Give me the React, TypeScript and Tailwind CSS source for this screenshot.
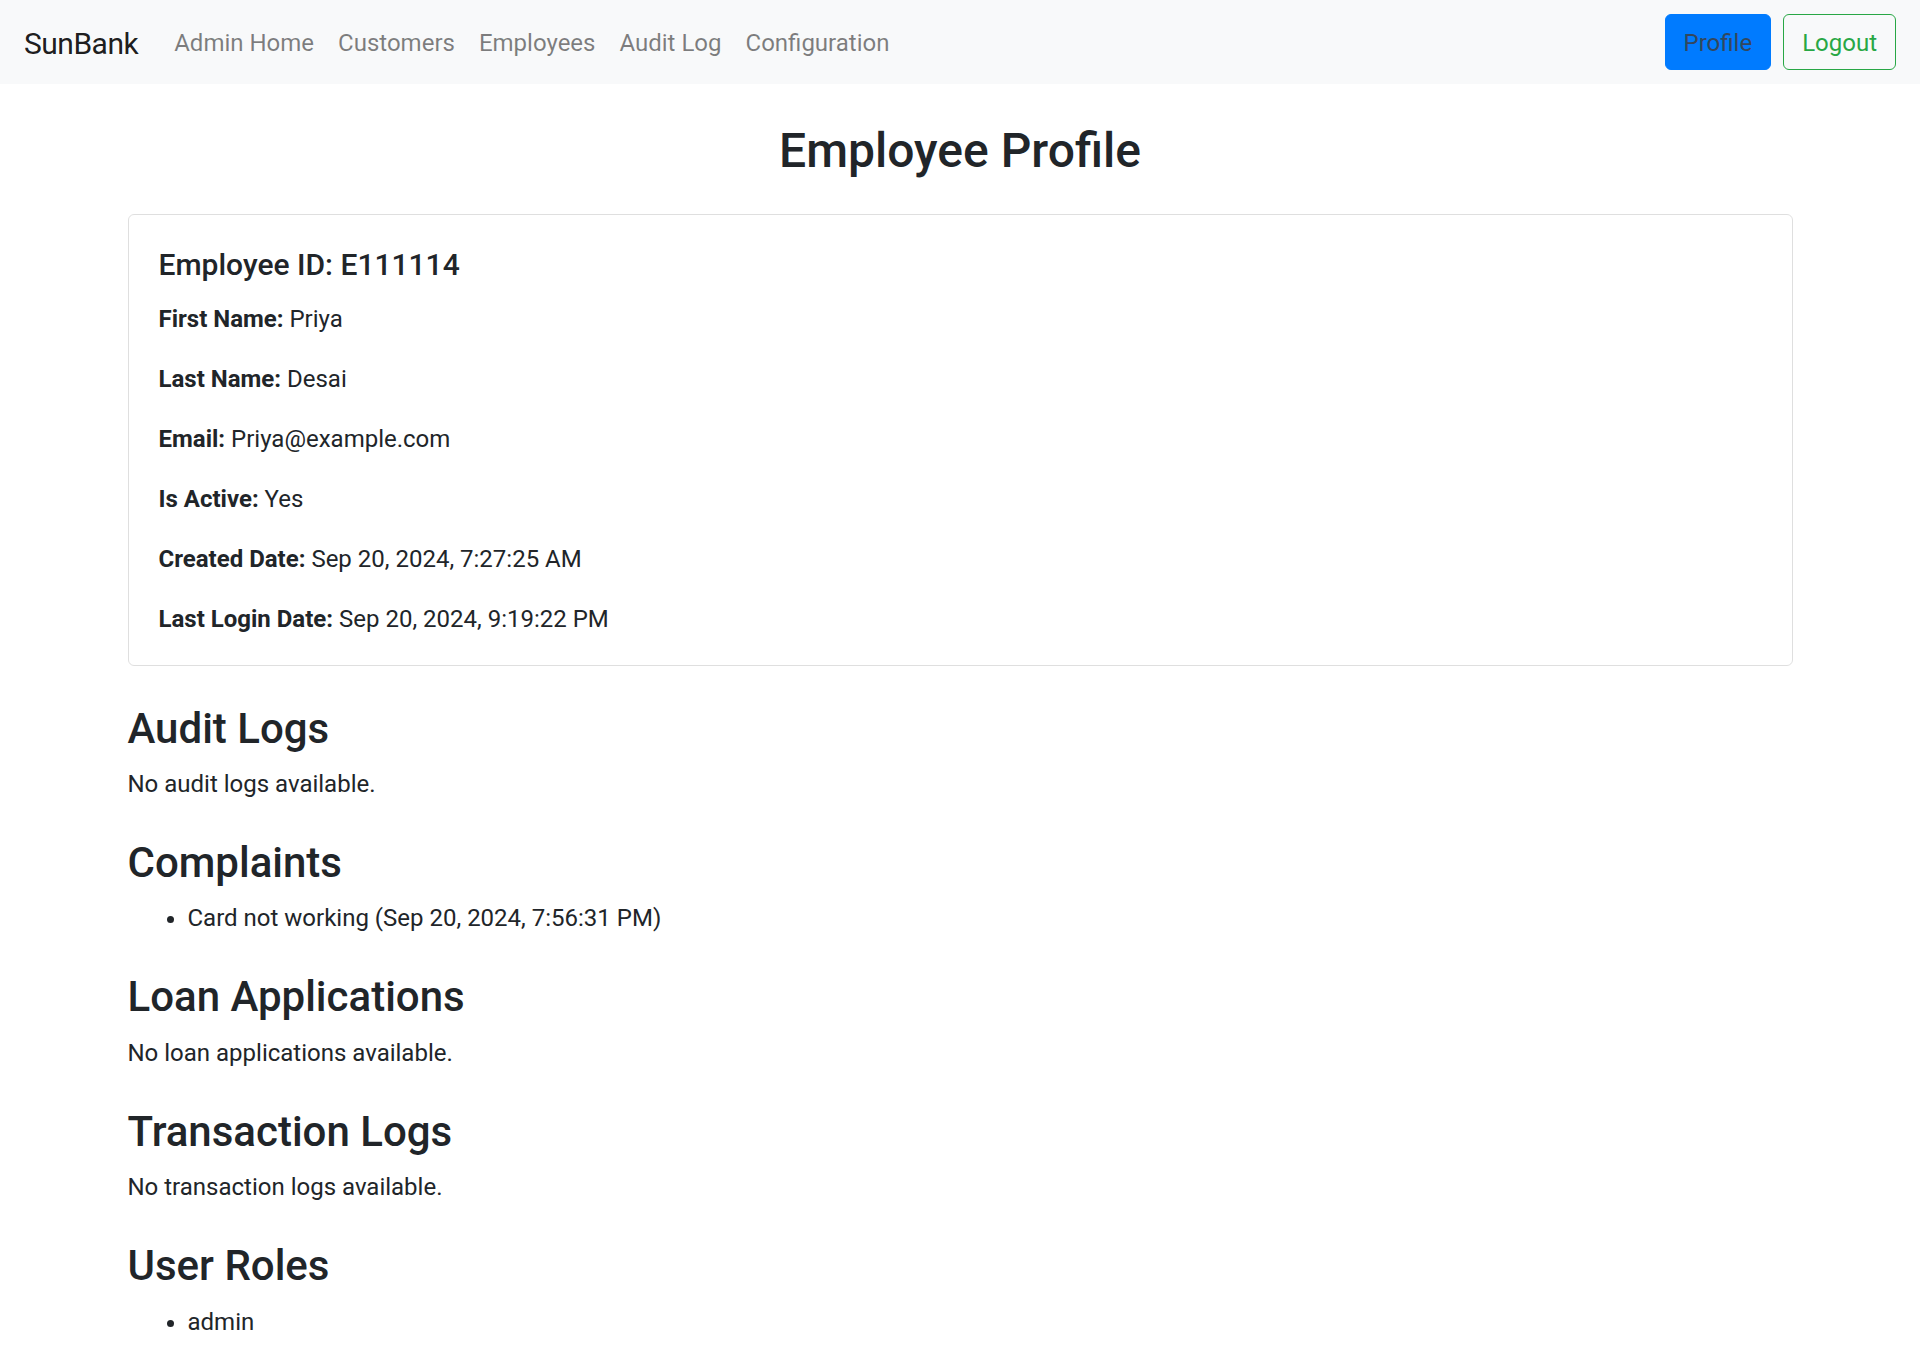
import React from "react";

const navLinks = ["Admin Home", "Customers", "Employees", "Audit Log", "Configuration"];

const details = [
  { label: "First Name:", value: "Priya" },
  { label: "Last Name:", value: "Desai" },
  { label: "Email:", value: "Priya@example.com" },
  { label: "Is Active:", value: "Yes" },
  { label: "Created Date:", value: "Sep 20, 2024, 7:27:25 AM" },
  { label: "Last Login Date:", value: "Sep 20, 2024, 9:19:22 PM" },
];

const Section = ({ title, children }: { title: string; children: React.ReactNode }) => (
  <div>
    <h3 className="mt-9 mb-3 text-[42px] leading-[50.4px] font-medium">{title}</h3>
    {children}
  </div>
);

const App = () => {
  return (
    <div className="min-h-screen bg-white text-[#212529] font-[family-name:Roboto,sans-serif] text-[24px] leading-[36px]">
      <nav className="h-[84px] bg-[#f8f9fa] flex items-center px-6">
        <a className="pt-[2px] text-[30px] leading-[45px] tracking-[-0.5px] text-black/90 mr-6">
          SunBank
        </a>
        <ul className="flex items-center pt-[2px]">
          {navLinks.map((link) => (
            <li key={link}>
              <a className="px-3 text-black/50">{link}</a>
            </li>
          ))}
        </ul>
        <div className="ml-auto flex items-center gap-3">
          <button className="h-[56px] px-[18px] pt-[2px] rounded-[6px] bg-[#007bff] border border-[#007bff] text-[#33475c]">
            Profile
          </button>
          <button className="h-[56px] px-[18px] pt-[2px] rounded-[6px] border border-[#28a745] text-[#28a745]">
            Logout
          </button>
        </div>
      </nav>

      <main className="max-w-[1710px] mx-auto px-[22.5px] mt-[38px]">
        <h2 className="text-center text-[48px] leading-[57.6px] font-medium mb-[34px]">
          Employee Profile
        </h2>

        <div className="border border-black/[.125] rounded-[6px] px-[30px] pt-[32px] pb-[28px]">
          <h5 className="text-[30px] leading-[36px] font-medium mb-[18px]">
            Employee ID: E111114
          </h5>
          {details.map((d, i) => (
            <p key={d.label} className={i === details.length - 1 ? "mb-0" : "mb-6"}>
              <strong className="font-bold">{d.label}</strong> {d.value}
            </p>
          ))}
        </div>

        <div className="pt-[2px]">
          <Section title="Audit Logs">
            <p>No audit logs available.</p>
          </Section>

          <Section title="Complaints">
            <ul className="list-disc pl-[60px]">
              <li>Card not working (Sep 20, 2024, 7:56:31 PM)</li>
            </ul>
          </Section>

          <Section title="Loan Applications">
            <p>No loan applications available.</p>
          </Section>

          <Section title="Transaction Logs">
            <p>No transaction logs available.</p>
          </Section>

          <Section title="User Roles">
            <ul className="list-disc pl-[60px] mb-6">
              <li>admin</li>
            </ul>
          </Section>
        </div>
      </main>
    </div>
  );
};

export default App;
